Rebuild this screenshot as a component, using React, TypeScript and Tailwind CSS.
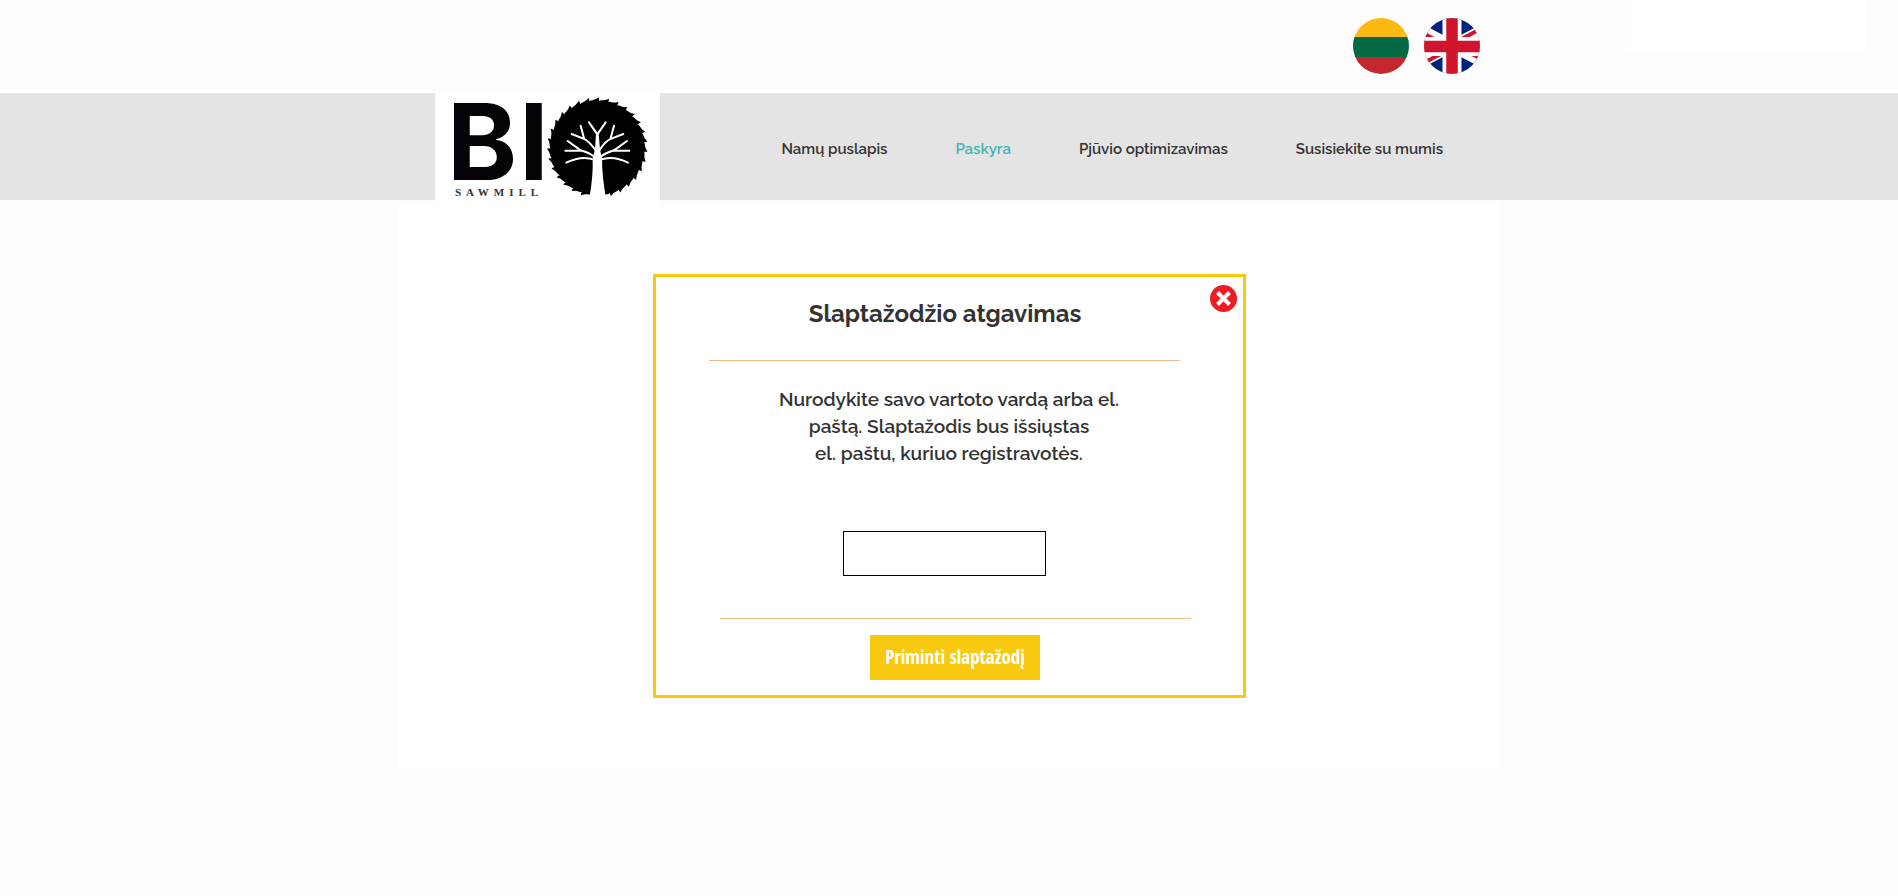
import React from "react";

const NAV = [
  { label: "Namų puslapis", active: false },
  { label: "Paskyra", active: true },
  { label: "Pjūvio optimizavimas", active: false },
  { label: "Susisiekite su mumis", active: false },
];

const TEETH = 31;

function sawPath() {
  const point = (radius: number, turn: number) => {
    const angle = (turn / TEETH) * Math.PI * 2;
    return `${(172 + radius * Math.sin(angle)).toFixed(1)} ${(170 - radius * Math.cos(angle)).toFixed(1)}`;
  };
  let d = `M${point(133, 0)}`;
  for (let i = 0; i < TEETH; i++) {
    d += `Q${point(144, i + 0.1)} ${point(143, i + 0.5)}Q${point(143, i + 0.75)} ${point(151, i + 1.15)}Q${point(139, i + 1.25)} ${point(133, i + 1)}`;
  }
  return d + "Z";
}

function Logo() {
  return (
    <svg viewBox="0 0 225 112" className="h-28 w-[225px]" role="img" aria-label="BIO Sawmill">
      <rect width="225" height="112" fill="#fff" />
      <text y="87" fontSize="106" fontWeight="700" fill="#050308" className="font-[Inter,sans-serif]">
        <tspan x="12">B</tspan>
        <tspan x="84">I</tspan>
      </text>
      <text x="20" y="103" fontSize="11" fontWeight="700" fill="#333" className="font-['Liberation_Serif',serif] tracking-[5px]">
        SAWMILL
      </text>
      <g transform="translate(105 -2) scale(0.3333)">
        <path d={sawPath()} fill="#000" />
        <path d="M168 128H176L180 175L186 203Q186 260 199 325H147Q160 260 158 203L165 175Z" fill="#fff" />
        <g fill="none" stroke="#fff" strokeLinecap="round" strokeLinejoin="round" strokeWidth="6">
          <path d="M147 94L172 130L197 94" />
          <path d="M167 178Q145 148 130 143L95 129M132 142L122 104" />
          <path d="M178 178Q198 148 214 143L250 129M212 142L222 104" />
          <path d="M163 198Q150 186 122 178L83 150M122 179H76" />
          <path d="M181 198Q196 186 222 178L261 150M222 179H268" />
          <path d="M163 206Q125 192 79 215M181 206Q220 192 264 215" />
        </g>
      </g>
    </svg>
  );
}

function LithuanianFlag() {
  return (
    <svg viewBox="0 0 56 56" className="size-14" aria-hidden="true">
      <clipPath id="lt"><circle cx="28" cy="28" r="28" /></clipPath>
      <g clipPath="url(#lt)">
        <rect width="56" height="19" fill="#fdb913" />
        <rect y="19" width="56" height="20" fill="#046a44" />
        <rect y="39" width="56" height="17" fill="#c4272d" />
      </g>
    </svg>
  );
}

function BritishFlag() {
  return (
    <svg viewBox="0 0 56 56" className="size-14" aria-hidden="true">
      <clipPath id="gb"><circle cx="28" cy="28" r="28" /></clipPath>
      <g clipPath="url(#gb)">
        <rect width="56" height="56" fill="#00247d" />
        <path d="M-14 6L70 50M70 6L-14 50" stroke="#fff" strokeWidth="11" />
        <path d="M-14 8.500L28 30.500M70 4L28 26M-14 52L28 30M70 47.500L28 25.500" stroke="#cf142b" strokeWidth="4" />
        <path d="M28 0V56M0 28.500H56" stroke="#fff" strokeWidth="19" />
        <path d="M28 0V56M0 28.500H56" stroke="#cf142b" strokeWidth="11.500" />
      </g>
    </svg>
  );
}

export default function App() {
  return (
    <div className="relative min-h-screen bg-[#fdfdfd] font-[Raleway,Lato,sans-serif] text-[#333]">
      <div className="absolute top-0 right-8 h-[53px] w-[241px] bg-white" />
      <div className="relative mx-auto flex h-[93px] max-w-[1102px] items-center justify-end gap-[15px] pr-5 pb-px">
        <a href="#lt" aria-label="Lietuvių"><LithuanianFlag /></a>
        <a href="#en" aria-label="English"><BritishFlag /></a>
      </div>

      <header className="h-[107px] bg-[#e4e4e4]">
        <div className="mx-auto flex max-w-[1102px] items-start justify-between pr-[23px] pl-[37px]">
          <a href="#home" className="relative"><Logo /></a>
          <nav className="flex h-28 items-center">
            {NAV.map((item) => (
              <a
                key={item.label}
                href="#nav"
                className={`px-[34px] text-[15px] font-semibold ${item.active ? "text-[#42b5b3]" : ""}`}
              >
                {item.label}
              </a>
            ))}
          </nav>
        </div>
      </header>

      <main className="mx-auto mt-1 max-w-[1102px] bg-white pt-[70px] pb-[71px]">
        <section
          role="dialog"
          aria-labelledby="title"
          className="relative mx-auto flex w-full max-w-[593px] flex-col items-center border-3 border-[#f8c90e] bg-white pt-[21px] pb-[15px]"
        >
          <button type="button" aria-label="Uždaryti" className="absolute top-2 right-1.5">
            <svg viewBox="0 0 27 27" className="size-[27px]">
              <circle cx="13.5" cy="13.500" r="13.500" fill="#ed1c24" />
              <path d="M7.500 7.500L19.500 19.500M19.500 7.500L7.500 19.500" stroke="#fff" strokeWidth="4" />
            </svg>
          </button>
          <h1 id="title" className="pr-2 text-2xl font-bold">Slaptažodžio atgavimas</h1>
          <hr className="mt-[30px] mr-[10px] w-[471px] border-[#f0b98a]" />
          <p className="mt-[25px] text-center text-[19px] leading-[27px] font-semibold">
            Nurodykite savo vartoto vardą arba el.
            <br />
            paštą. Slaptažodis bus išsiųstas
            <br />
            el. paštu, kuriuo registravotės.
          </p>
          <input
            type="text"
            aria-label="Vartotojo vardas arba el. paštas"
            className="mt-16 mr-[10px] h-[45px] w-[203px] border border-black bg-white px-2"
          />
          <hr className="mt-[42px] ml-3 w-[471px] border-[#f0b98a]" />
          <button
            type="button"
            className="mt-4 ml-3 h-[45px] w-[170px] bg-[#f8c90e] font-['Open_Sans_Condensed','Liberation_Sans_Narrow','Open_Sans',sans-serif] text-[19px] font-bold text-white"
          >
            Priminti slaptažodį
          </button>
        </section>
      </main>
    </div>
  );
}
